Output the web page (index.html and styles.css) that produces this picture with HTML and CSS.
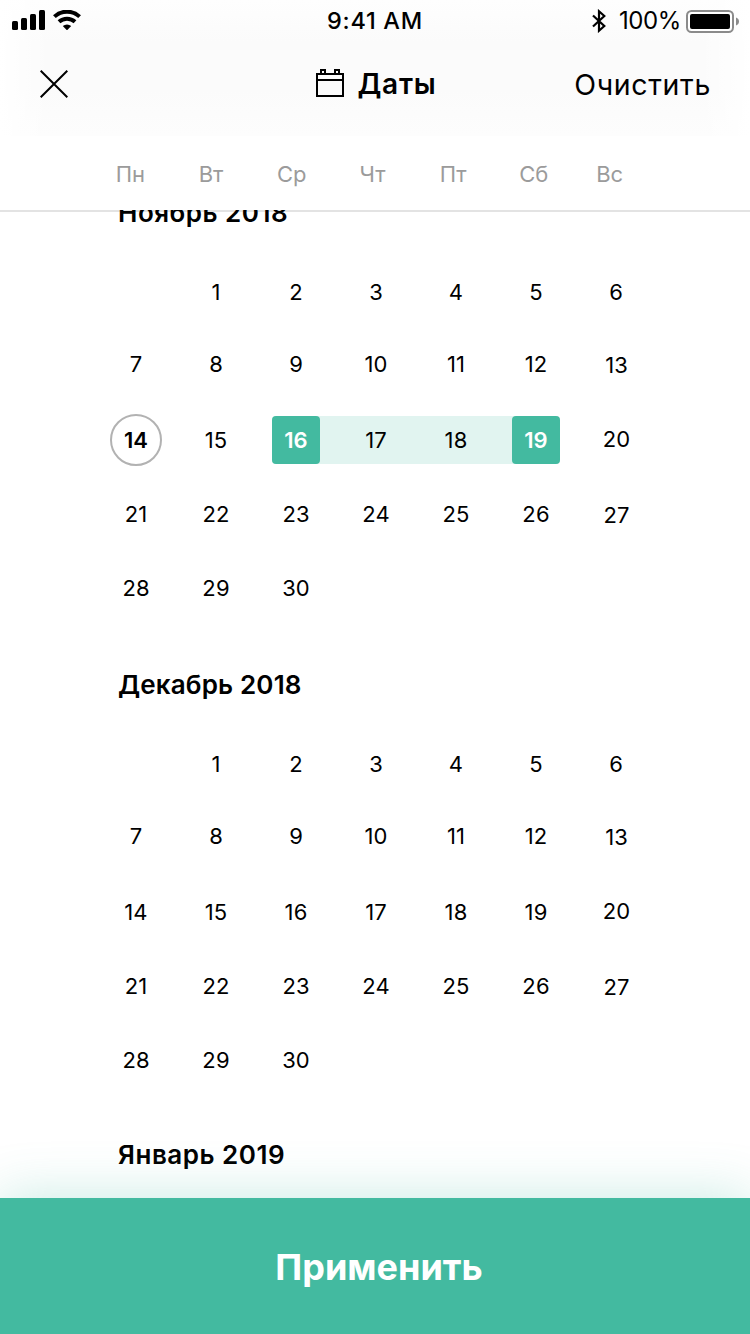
FILE: index.html
```html
<!DOCTYPE html>
<html lang="ru">
<head>
<meta charset="utf-8">
<title>Даты</title>
<link rel="stylesheet" href="styles.css">
</head>
<body>
<div class="screen">
  <header class="top">
    <div class="status">
      <div class="status-left">
        <svg class="signal" width="34" height="20" viewBox="0 0 34 20"><rect x="0" y="11" width="6" height="9" rx="1.5"/><rect x="9" y="8" width="6" height="12" rx="1.5"/><rect x="18" y="4" width="6" height="16" rx="1.5"/><rect x="27" y="0" width="6" height="20" rx="1.5"/></svg>
        <svg class="wifi" width="28" height="20" viewBox="0 0 28 20"><g fill="none" stroke="#000" stroke-width="4"><path d="M1.400 6.600a18.500 18.500 0 0 1 25.200 0"/><path d="M6 11.800a11.800 11.800 0 0 1 16 0"/></g><path d="M9.800 16a6.400 6.400 0 0 1 8.400 0L14.600 19.800q-.6.4-1.200 0z"/></svg>
      </div>
      <div class="time">9:41 AM</div>
      <div class="status-right">
        <svg class="bluetooth" width="14" height="24" viewBox="0 0 14 24"><path d="M1 6.500L12.300 17L7 21.700V2.300L12.300 7L1 17.500" fill="none" stroke="#000" stroke-width="2.200"/></svg>
        <span class="percent">100%</span>
        <svg class="battery" width="53" height="24" viewBox="0 0 53 24"><rect x="1" y="2" width="46" height="21" rx="4.500" fill="#fff" stroke="#8b8b8b" stroke-width="2"/><rect x="4" y="5" width="40" height="15" rx="2"/><path d="M50 8.500c4 1.200 4 7 0 8z" fill="#8b8b8b"/></svg>
      </div>
    </div>
    <nav class="nav">
      <svg class="close" width="28" height="28" viewBox="0 0 28 28"><path d="M.7.7l26.600 26.600M27.300.7L.7 27.300" stroke="#000" stroke-width="2"/></svg>
      <div class="title">
        <svg width="28" height="28" viewBox="0 0 28 28"><path d="M1 5h26v22H1zM1 11h26M5 5V1h4v4M19 5V1h4v4" fill="none" stroke="#000" stroke-width="2"/></svg>
        <span>Даты</span>
      </div>
      <div class="clear">Очистить</div>
    </nav>
  </header>
  <div class="weekdays"><span>Пн</span><span>Вт</span><span>Ср</span><span>Чт</span><span>Пт</span><span>Сб</span><span>Вс</span></div>
  <main class="calendar">
    <h2 class="month month-cut">Ноябрь 2018</h2>
    <div class="days">
      <span></span><span>1</span><span>2</span><span>3</span><span>4</span><span>5</span><span>6</span>
      <span>7</span><span>8</span><span>9</span><span>10</span><span>11</span><span>12</span><span class="low">13</span>
      <span class="today"><b>14</b></span><span>15</span><span class="range start"><b>16</b></span><span class="range">17</span><span class="range">18</span><span class="range end"><b>19</b></span><span class="high">20</span>
      <span>21</span><span>22</span><span>23</span><span>24</span><span>25</span><span>26</span><span class="low">27</span>
      <span>28</span><span>29</span><span>30</span>
    </div>
    <h2 class="month month-mid">Декабрь 2018</h2>
    <div class="days">
      <span></span><span>1</span><span>2</span><span>3</span><span>4</span><span>5</span><span>6</span>
      <span>7</span><span>8</span><span>9</span><span>10</span><span>11</span><span>12</span><span class="low">13</span>
      <span>14</span><span>15</span><span>16</span><span>17</span><span>18</span><span>19</span><span class="high">20</span>
      <span>21</span><span>22</span><span>23</span><span>24</span><span>25</span><span>26</span><span class="low">27</span>
      <span>28</span><span>29</span><span>30</span>
    </div>
    <h2 class="month month-last">Январь 2019</h2>
  </main>
  <div class="apply">Применить</div>
</div>
</body>
</html>
```
FILE: styles.css
```css
* { box-sizing: border-box; }
body { margin: 0; background: #fff; }
.screen {
  width: 750px; height: 1334px; overflow: hidden;
  display: flex; flex-direction: column;
  font-family: Inter, "Liberation Sans", sans-serif;
  color: #000; background: #fff;
}
svg { display: block; flex: none; }
.top {
  height: 136px; flex: none; overflow: hidden;
  background: linear-gradient(90deg, #fff, rgba(255,255,255,0) 50px, rgba(255,255,255,0) 700px, #fff), linear-gradient(#fefefe, #fbfbfb 42px, #fbfbfb 90px, #fdfdfd);
}
.status {
  height: 40px; padding: 0 11px 0 12px;
  display: grid; grid-template-columns: 1fr auto 1fr; align-items: center;
}
.status-left { display: flex; gap: 7px; margin-top: -1px; }
.time { font-size: 23.500px; font-weight: 500; line-height: 40px; letter-spacing: .7px; margin-left: -1px; }
.status-right { display: flex; align-items: center; justify-content: flex-end; }
.percent { font-size: 24px; line-height: 40px; letter-spacing: -.4px; margin: 1px 5px 0 13px; }
.nav {
  height: 88px; padding: 0 39px 0 40px;
  display: grid; grid-template-columns: 1fr auto 1fr; align-items: center;
}
.title { display: flex; align-items: center; gap: 13px; margin-left: 2px; font-size: 28px; font-weight: 600; letter-spacing: .8px; }
.title svg { margin-top: -2px; }
.clear { font-size: 28.500px; letter-spacing: .65px; text-align: right; padding-top: 1px; }
.weekdays {
  height: 74px; flex: none; padding-left: 90px;
  display: grid; grid-template-columns: repeat(6, 80.700px) 71px;
  font-size: 22px; line-height: 76px; text-align: center; color: #9b9b9b;
}
.calendar {
  height: 988px; flex: none; overflow: hidden; padding-left: 96px;
  box-shadow: inset 0 2px #e3e3e3;
}
.month {
  margin: 0; height: 100px; padding: 14px 0 0 22px;
  font-size: 26px; font-weight: 600; line-height: 86px; letter-spacing: .5px;
}
.month-cut { height: 46px; padding-top: 0; line-height: 6px; }
.month-mid { letter-spacing: .15px; }
.month-last { padding-top: 12px; }
.days {
  display: grid; grid-template-columns: repeat(7, 80px); grid-template-rows: 72px 72px 80px 68px 80px;
  font-size: 22px; letter-spacing: .1px;
}
.days span { display: flex; align-items: center; justify-content: center; }
.days .low { padding: 1px 0 0 1px; }
.days .high { padding: 0 0 2px 1px; }
.days b { display: flex; align-items: center; justify-content: center; font-weight: 600; }
.today b { width: 52px; height: 52px; border: 2px solid #b2b2b2; border-radius: 50%; }
.days .range { height: 48px; align-self: center; background: #e1f4f0; }
.days .start { margin-left: 16px; justify-content: flex-start; border-radius: 4px 0 0 4px; }
.days .end { margin-right: 16px; justify-content: flex-end; border-radius: 0 4px 4px 0; }
.range b { width: 48px; height: 48px; border-radius: 4px; background: #43baa0; color: #fff; }
.apply {
  height: 136px; flex: none; padding-left: 8px;
  background: #43baa0; box-shadow: 0 0 54px rgba(67,186,160,.3);
  color: #fff; font-size: 36px; font-weight: 700; line-height: 138px; text-align: center;
}
```
